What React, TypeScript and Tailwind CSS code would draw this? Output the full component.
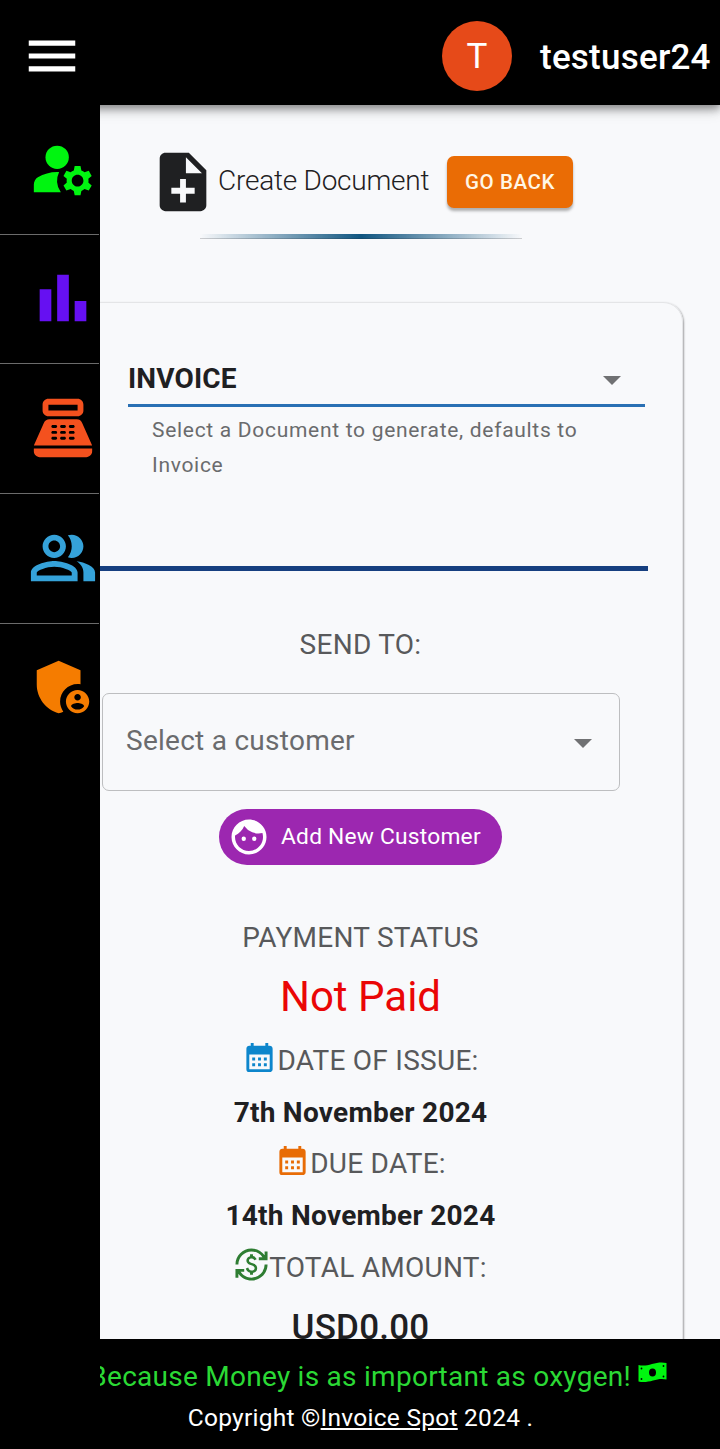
import type { ReactNode } from "react";
import {
  MdAdminPanelSettings,
  MdBarChart,
  MdCalendarMonth,
  MdCurrencyExchange,
  MdFace,
  MdManageAccounts,
  MdMenu,
  MdNoteAdd,
  MdOutlinePeopleAlt,
  MdPointOfSale,
} from "react-icons/md";

function Header() {
  return (
    <header className="relative z-10 flex h-[105px] shrink-0 items-center justify-between bg-black pl-[21px] pr-[10px] text-white shadow-[0_3px_7px_rgba(0,0,0,0.3),0_7px_9px_rgba(0,0,0,0.14),0_2px_18px_rgba(0,0,0,0.12)]">
      <MdMenu className="mt-[7px] size-[62px]" />
      <div className="mt-[7px] flex items-center gap-7">
        <div className="flex size-[70px] items-center justify-center rounded-full bg-[#e64a19] text-[35px] leading-none">
          T
        </div>
        <span className="w-[170px] whitespace-nowrap pt-0.5 text-[35px] font-medium leading-none tracking-[0.0065em]">testuser24</span>
      </div>
    </header>
  );
}

function SideItem({ children, last }: { children: ReactNode; last?: boolean }) {
  return (
    <div
      className={
        last
          ? "flex h-[129.6px] w-[99px] shrink-0 pl-7 pt-[28px]"
          : "flex h-[129.6px] w-[99px] shrink-0 border-b border-[#6b6b6b] pl-7 pt-[28.600px]"
      }
    >
      {children}
    </div>
  );
}

function Sidebar() {
  return (
    <nav className="flex w-[100px] shrink-0 flex-col bg-black pt-[0.3px]">
      <SideItem>
        <MdManageAccounts className="size-[70px] shrink-0 text-[#00f510]" />
      </SideItem>
      <SideItem>
        <MdBarChart className="size-[70px] shrink-0 text-[#6610f2]" />
      </SideItem>
      <SideItem>
        <MdPointOfSale className="size-[70px] shrink-0 text-[#f4511e]" />
      </SideItem>
      <SideItem>
        <MdOutlinePeopleAlt className="size-[70px] shrink-0 text-[#35a2d9]" />
      </SideItem>
      <SideItem last>
        <MdAdminPanelSettings className="size-[70px] shrink-0 text-[#f57c00]" />
      </SideItem>
    </nav>
  );
}

function Caret() {
  return (
    <svg viewBox="0 0 10 5" className="h-[9px] w-[18px] text-[#707173]" fill="currentColor">
      <path d="M0 0l5 5 5-5z" />
    </svg>
  );
}

function Row({ children }: { children: ReactNode }) {
  return (
    <div className="flex h-[51.8px] items-center justify-center whitespace-nowrap text-[28px] tracking-[0.00938em] text-[#58595b]">
      {children}
    </div>
  );
}

function Card() {
  return (
    <section className="-ml-[63px] mr-[37px] mt-[63px] flex h-[1100px] shrink-0 flex-col rounded-[20px] border border-[#e4e5e7] pl-px pt-[53px] shadow-[1px_1px_2px_rgba(0,0,0,0.35)]">
      <div className="ml-[89px] flex h-[51px] w-[517px] items-center justify-between border-b-[3px] border-[#2a70b4] pb-[3px] pr-6">
        <span className="text-[28px] font-bold leading-none tracking-[0.005em]">INVOICE</span>
        <div className="mt-1">
          <Caret />
        </div>
      </div>
      <p className="ml-[113px] mt-[6px] w-[470px] text-[21px] leading-[35px] tracking-[0.0333em] text-[#6a6b6d]">
        Select a Document to generate, defaults to Invoice
      </p>
      <div className="mt-[83px] h-[5px] w-[609px] bg-[#163f80]" />
      <h2 className="mt-[54px] text-center text-[28px] leading-10 tracking-[0.00938em] text-[#58595b]">SEND TO:</h2>
      <div className="ml-[63px] mt-[28px] flex h-[98px] w-[518px] items-center justify-between rounded-[7px] border border-[#bdbec0] pl-[23px] pr-[27px] text-[28px] tracking-[0.00938em] text-[#6a6b6d]">
        <span className="-mt-0.5">Select a customer</span>
        <div className="mt-0.5">
          <Caret />
        </div>
      </div>
      <button className="mt-[18px] flex h-14 w-[283px] items-center gap-[11px] self-center rounded-full bg-[#9c27b0] pl-[9px] text-[22.75px] text-white">
        <MdFace className="size-[42px] shrink-0" />
        <span className="whitespace-nowrap tracking-[0.01em]">Add New Customer</span>
      </button>
      <h2 className="mt-[53px] text-center text-[28px] leading-10 tracking-[0.00938em] text-[#58595b]">PAYMENT STATUS</h2>
      <p className="mt-[11px] text-center text-[42px] leading-[56px] text-[#ea0606]">Not Paid</p>
      <div className="mt-[10px] flex flex-col">
        <Row>
          <MdCalendarMonth className="-mt-[7px] size-[35px] text-[#0d86cc]" />
          DATE OF ISSUE:
        </Row>
        <Row>
          <span className="font-bold text-[#1f2022]">7th November 2024</span>
        </Row>
        <Row>
          <MdCalendarMonth className="-mt-[7px] size-[35px] text-[#e86c06]" />
          DUE DATE:
        </Row>
        <Row>
          <span className="font-bold text-[#1f2022]">14th November 2024</span>
        </Row>
        <Row>
          <MdCurrencyExchange className="-mt-[7px] size-[35px] text-[#2e7d32]" />
          TOTAL AMOUNT:
        </Row>
      </div>
      <p className="mt-[6px] text-center text-[35px] font-medium leading-[56px] tracking-[0.0065em]">USD0.00</p>
    </section>
  );
}

function Main() {
  return (
    <main className="flex w-[620px] flex-col overflow-hidden bg-[#f8f9fb] text-[#1f2022]">
      <div className="ml-12 mt-[42px] flex h-[70px] shrink-0 items-center">
        <MdNoteAdd className="size-[70px] shrink-0" />
        <h1 className="w-[229px] whitespace-nowrap pb-0.5 text-[28px] font-light leading-none tracking-[-0.00833em]">Create Document</h1>
        <button className="h-[52px] w-[126px] rounded-[7px] bg-[#ea6c05] text-[20.500px] font-medium tracking-[0.0286em] text-[#fff6e5] shadow-[0_3px_3px_rgba(0,0,0,0.3)]">
          GO BACK
        </button>
      </div>
      <div className="ml-[100px] mt-[17px] h-[5px] w-[322px] shrink-0 border-b border-[#1f2022]/20 bg-linear-to-r from-transparent via-[#0f5580] to-transparent" />
      <Card />
    </main>
  );
}

function Banknote() {
  return (
    <svg viewBox="0 0 29 21" className="h-[21px] w-[29px]">
      <path
        d="M0.500 3C5 4.200 9 3.500 14 2S24 0 28.500 1L28.500 17.500C24 16.500 20 17 15 18.500S5 20.500 0.500 19.500Z"
        fill="#00f510"
      />
      <ellipse cx="14.500" cy="10.500" rx="3.500" ry="4" fill="#000" />
      <circle cx="3.500" cy="6.500" r="0.900" fill="#000" />
      <circle cx="3.500" cy="17" r="0.900" fill="#000" />
      <circle cx="25.500" cy="4" r="0.900" fill="#000" />
      <circle cx="25.500" cy="14.500" r="0.900" fill="#000" />
    </svg>
  );
}

function Footer() {
  return (
    <footer className="h-[110px] shrink-0 bg-black pt-[18px] text-white">
      <div className="ml-[100px] flex h-10 w-[567px] items-center justify-end gap-[7px] overflow-hidden whitespace-nowrap text-[28px] tracking-[0.00938em] text-[#2bd935]">
        <span>Because Money is as important as oxygen!</span>
        <div className="-mt-[9px] shrink-0">
          <Banknote />
        </div>
      </div>
      <p className="mt-[3px] pl-px text-center text-[24.5px] leading-[35px] tracking-[0.01071em]">
        Copyright ©<span className="underline">Invoice Spot</span> 2024 .
      </p>
    </footer>
  );
}

export default function App() {
  return (
    <div className="flex h-[1449px] w-[720px] flex-col overflow-hidden bg-black font-['Roboto',sans-serif]">
      <Header />
      <div className="flex h-[1234px] shrink-0 overflow-hidden">
        <Sidebar />
        <Main />
      </div>
      <Footer />
    </div>
  );
}
